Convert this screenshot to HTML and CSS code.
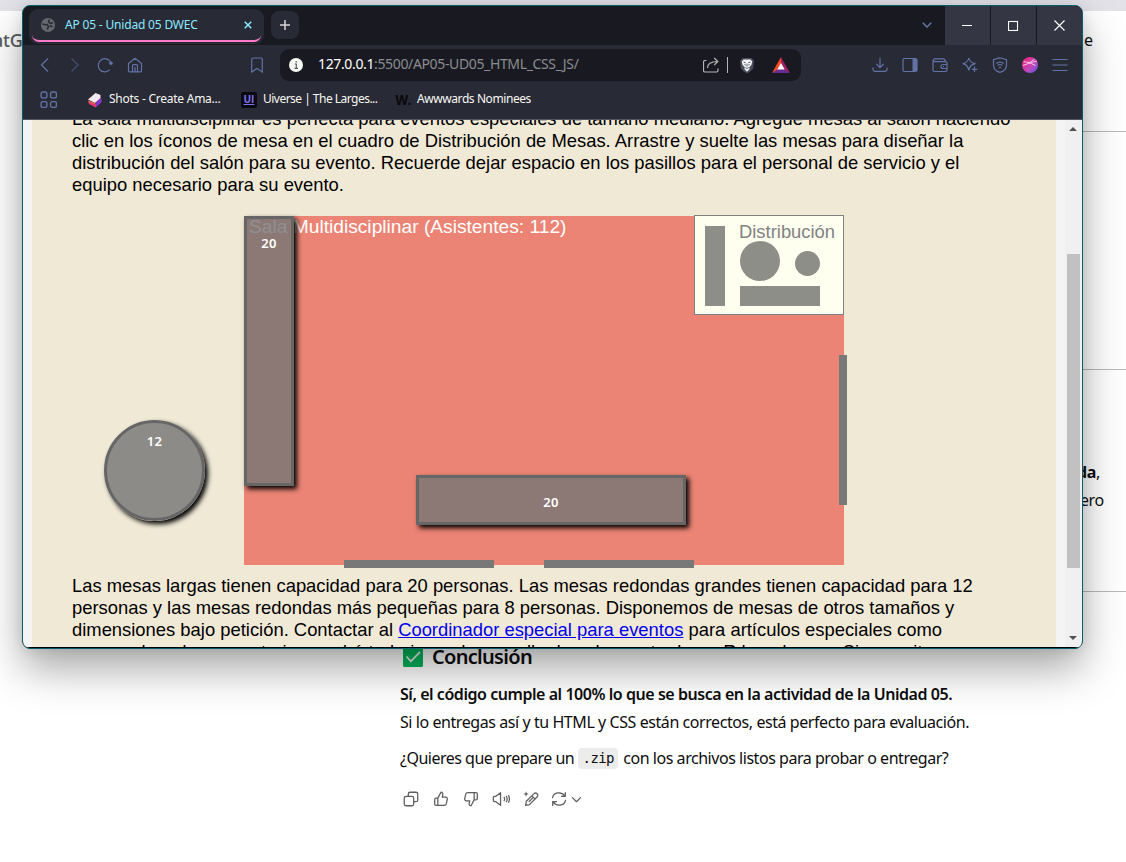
FILE: index.html
```
<!DOCTYPE html>
<html lang="es">
<head>
<meta charset="utf-8">
<title>AP 05 - Unidad 05 DWEC</title>
<link rel="stylesheet" href="styles.css">
</head>
<body>
<div class="desktop">
  <main class="chat">
    <div class="chat-strip"></div>
    <div class="chat-row row-top"><span class="brand">atGPT</span><span class="tail">le</span></div>
    <div class="chat-row row-mid"></div>
    <div class="chat-row row-low"><div class="tail-lines"><div class="t1"><b>da</b>,</div><div class="t2">ero</div></div></div>
    <section class="answer">
      <h2><svg class="check" viewBox="0 0 20 20"><rect width="20" height="20" rx="1.5" fill="#00b35b"/><path d="M3.500 9.500l4.300 4.800L17 5" fill="none" stroke="#e2eee6" stroke-width="1.800"/></svg><span>Conclusión</span></h2>
      <p class="p1"><b>Sí, el código cumple al 100% lo que se busca en la actividad de la Unidad 05.</b></p>
      <p class="p2">Si lo entregas así y tu HTML y CSS están correctos, está perfecto para evaluación.</p>
      <p class="p3"><span>¿Quieres que prepare un</span><code>.zip</code><span class="p3b">con los archivos listos para probar o entregar?</span></p>
      <div class="actions">
        <svg viewBox="0 0 20 20"><rect x="2.500" y="7" width="10.500" height="10.500" rx="2"/><path d="M7 7V4.500a2 2 0 0 1 2-2h6.500a2 2 0 0 1 2 2V11a2 2 0 0 1-2 2h-2.500"/></svg>
        <svg viewBox="0 0 20 20"><path d="M6.500 9v8H4.500a1.500 1.500 0 0 1-1.500-1.500v-5A1.500 1.500 0 0 1 4.500 9zL10 2.500c1.700 0 2.300 1.300 2 2.700L11.400 8H15c1.500 0 2.300 1.200 2 2.500l-1.200 5c-.3 1.100-1.100 1.700-2.200 1.700H6.500"/></svg>
        <svg viewBox="0 0 20 20"><path d="M13.500 11V3h2A1.500 1.500 0 0 1 17 4.500v5a1.500 1.500 0 0 1-1.500 1.500zL10 17.500c-1.700 0-2.300-1.300-2-2.700L8.600 12H5c-1.500 0-2.300-1.200-2-2.500l1.200-5C4.500 3.400 5.300 2.800 6.400 2.800h7.100"/></svg>
        <svg viewBox="0 0 20 20"><path d="M1.500 8.500v3c0 .8.500 1.500 1.300 1.500h1.500l5.200 4V3L4.300 7H2.800C2 7 1.500 7.700 1.500 8.500zM13.500 8q1 2 0 4M16 7q1.700 3 0 6M18.500 6.300q1.700 3.700 0 7.400"/></svg>
        <svg viewBox="0 0 20 20"><path d="M4 17l.8-4.500 8.300-8.200c2.500-2.500 6.100 1 3.600 3.500L8.300 16.200zM11 6.500l3.600 3.600M8 12.800l4-4"/><path class="solid" d="M4.500 1.500l.8 2.200 2.200.8-2.200.8-.8 2.200-.8-2.200-2.200-.8 2.200-.8z"/></svg>
        <svg viewBox="0 0 20 20"><path d="M2.800 8.500C4.200 2 12.500 1.500 16.500 6.500M17 2.800V7h-4.200M17.200 11.500C15.800 18 7.500 18.500 3.500 13.500M3 17.200V13h4.200"/></svg>
        <svg class="chev" viewBox="0 0 12 20"><path d="M1.500 8.500L6 13l4.500-4.500"/></svg>
      </div>
    </section>
  </main>

  <div class="window">
    <div class="tabbar">
      <div class="tab">
        <svg class="globe" viewBox="0 0 14 14"><circle cx="7" cy="7" r="7" fill="#65686e"/><path d="M1.500 6l3 .8 1.500-.3 1.500 2-1.300 3M8.500 1.500L7.500 4l2 1.500 2.500-1M8.500 8l3 .5" fill="none" stroke="#282a36" stroke-width="1.500"/></svg>
        <span class="tab-title">AP 05 - Unidad 05 DWEC</span>
        <svg class="tab-x" viewBox="0 0 8 8"><path d="M.7.7l6.600 6.600M7.300.7L.7 7.300"/></svg>
      </div>
      <div class="newtab"><svg viewBox="0 0 10 10"><path d="M5 0v10M0 5h10"/></svg></div>
      <svg class="tab-chev" viewBox="0 0 10 6"><path d="M.8.800L5 5 9.200.8"/></svg>
      <div class="winbtn"><svg viewBox="0 0 11 11"><path d="M0 5.500h10"/></svg></div>
      <div class="winbtn"><svg viewBox="0 0 11 11"><rect x=".5" y="1.500" width="9" height="9"/></svg></div>
      <div class="winbtn last"><svg viewBox="0 0 11 11"><path d="M.5.500l10 10M10.500.5l-10 10"/></svg></div>
    </div>
    <div class="toolbar">
      <svg class="ic" viewBox="0 0 16 16"><path d="M11 1.500L4.500 8l6.500 6.500"/></svg>
      <svg class="ic dim" viewBox="0 0 16 16"><path d="M4.500 1.500L11 8l-6.500 6.500"/></svg>
      <svg class="ic" viewBox="0 0 16 16"><path d="M12.800 12.700A6.600 6.600 0 1 1 14 6"/><circle cx="14" cy="6.200" r="1.800" class="dot"/></svg>
      <svg class="ic" viewBox="0 0 16 16"><path d="M1.500 6.500L8 1.200l6.500 5.300v7.300a1 1 0 0 1-1 1h-11a1 1 0 0 1-1-1zM5.500 14.500V8.700a1 1 0 0 1 1-1h3a1 1 0 0 1 1 1v5.800M8 10v4.500"/></svg>
      <svg class="ic mark" viewBox="0 0 16 16"><path d="M2.700 2.500a1.500 1.500 0 0 1 1.500-1.500h7.600a1.500 1.500 0 0 1 1.500 1.500V15L8 11.500 2.700 15z"/></svg>
      <div class="address">
        <svg class="info" viewBox="0 0 14 14"><circle cx="7" cy="7" r="7" fill="#f8f8f2"/><path d="M5.700 6H7.300v4.300M5.500 10.300h3.500M7.200 3v1.500" fill="none" stroke="#555862" stroke-width="1.200"/></svg>
        <span class="url"><em>127.0.0.1</em>:5500/AP05-UD05_HTML_CSS_JS/</span>
        <svg class="share" viewBox="0 0 16 16"><path d="M3.500 3.500H2a1.500 1.500 0 0 0-1.500 1.500v8.500A1.500 1.500 0 0 0 2 15h11.500A1.500 1.500 0 0 0 15 13.500v-2M4.500 11c0-4 3-6.500 10-6.500M11.200 1l3.600 3.500-3.600 3.700"/></svg>
        <i class="sep"></i>
        <svg class="brave" viewBox="0 0 16 18"><path d="M3 .5h10l3 3-1 8.500-3 3.500-4 2.500-4-2.500L1 12 0 3.500z" fill="#4a4d5c"/><path d="M4 2h8l2 2.500-1 4-2.500 2.500.5 2-3 3-3-3 .5-2L3 8.500l-1-4z" fill="#f5f5f7"/><path d="M4 5l2.500 1M12 5L9.500 6M8 7v3M6 11.500l2 .8 2-.8M5 8l1.500.5M11 8l-1.500.5" stroke="#444756" fill="none"/></svg>
        <svg class="bat" viewBox="0 0 18 16"><path d="M9 0L0 16l9-5z" fill="#ff4724"/><path d="M9 0l9 16-9-5z" fill="#9e1f63"/><path d="M0 16h18l-9-5.500z" fill="#662d91"/><path d="M9 6l3.700 6.500H5.300z" fill="#fff"/></svg>
      </div>
      <div class="tools">
        <svg class="ic" viewBox="0 0 16 16"><path d="M8 1v9.500M4.300 7L8 10.700 11.700 7M1 10.500v2A1.800 1.800 0 0 0 2.800 14.300h10.400A1.800 1.800 0 0 0 15 12.500v-2"/></svg>
        <svg class="ic" viewBox="0 0 16 16"><rect x="1" y="1.500" width="14" height="13" rx="1.500"/><path d="M10.500 2h4.500v12h-4.500z" class="dot"/></svg>
        <svg class="ic" viewBox="0 0 16 16"><path d="M13 4.500V3.300A1.500 1.500 0 0 0 11.500 1.800H2.500a1.500 1.500 0 0 0 0 2.800h11A1.500 1.500 0 0 1 15 6v7a1.500 1.500 0 0 1-1.500 1.500h-11A1.500 1.500 0 0 1 1 13V3.300M15 7.500h-4a2 2 0 0 0 0 4h4M11 9.500h1"/></svg>
        <svg class="ic" viewBox="0 0 16 16"><path d="M6.800 1Q7.800 5.700 13.500 6.700Q7.800 7.700 6.800 13.500Q5.800 7.700.7 6.700Q5.800 5.700 6.800 1zM12.500 9.500v5.500M9.800 12.300h5.500"/></svg>
        <svg class="ic" viewBox="0 0 16 16"><path d="M8 .7l6.500 2v5.500c0 3.500-3 6-6.500 7.200C4.500 14.200 1.500 11.700 1.500 8.200V2.700zM4.300 6.500q3.700-2.800 7.400 0M5.500 8.500q2.500-2 5 0"/><circle cx="8" cy="10.500" r="1" class="dot"/></svg>
        <svg class="ic" viewBox="0 0 16 16"><defs><linearGradient id="av" x1="0" y1="0" x2="1" y2="1"><stop offset=".2" stop-color="#e52d87"/><stop offset=".6" stop-color="#c048bc"/><stop offset="1" stop-color="#4c59e5"/></linearGradient></defs><circle cx="8" cy="8" r="8" fill="url(#av)" stroke="none"/><path class="streak" d="M1.500 4.500Q7 6.500 15 4M1 8.500Q8 7 12.500 2M6 5.500Q10 6.500 13.500 8.500"/></svg>
        <svg class="ic" viewBox="0 0 16 16"><path d="M.5 2.500h15M.5 8h15M.5 13.500h15"/></svg>
      </div>
    </div>
    <div class="bookmarks">
      <svg class="apps" viewBox="0 0 17 17"><rect x="1" y="1" width="5.500" height="5.500" rx="1.500"/><rect x="10" y="1" width="5.500" height="5.500" rx="1.500"/><rect x="1" y="10" width="5.500" height="5.500" rx="1.500"/><rect x="10" y="10" width="5.500" height="5.500" rx="1.500"/></svg>
      <div class="bm bm1"><svg viewBox="0 0 16 16"><path d="M1 9l7 3 6-6 .5 4L8.500 15.500 2 12z" fill="#dd3478"/><path d="M9 11l5-5 .5 3.500L9 15z" fill="#7b35df"/><path d="M1 7.500L8.500 1l5 2v3L8 11z" fill="#f6e9ee"/><path d="M1 8.500L8 11l.5 1.500L2 10.500z" fill="#ef6550"/></svg><span>Shots - Create Ama...</span></div>
      <div class="bm bm2"><span class="ui-logo">UI</span><span>Uiverse | The Larges...</span></div>
      <div class="bm bm3"><span class="aw-logo">W.</span><span>Awwwards Nominees</span></div>
    </div>
    <div class="viewport">
      <article class="page">
        <div class="copy intro">
          <div class="l1">La sala multidisciplinar es perfecta para eventos especiales de tamaño mediano. Agregue mesas al salón haciendo</div>
          <div>clic en los íconos de mesa en el cuadro de Distribución de Mesas. Arrastre y suelte las mesas para diseñar la</div>
          <div>distribución del salón para su evento. Recuerde dejar espacio en los pasillos para el personal de servicio y el</div>
          <div>equipo necesario para su evento.</div>
        </div>
        <div class="room">
          <div class="room-title">Sala Multidisciplinar (Asistentes: 112)</div>
          <div class="palette"><span>Distribución</span><i class="m-v"></i><i class="m-c"></i><i class="m-s"></i><i class="m-h"></i></div>
          <i class="door d1"></i><i class="door d2"></i><i class="door d3"></i>
          <div class="table tall">20</div>
          <div class="table round">12</div>
          <div class="table wide">20</div>
        </div>
        <div class="copy outro">
          <div>Las mesas largas tienen capacidad para 20 personas. Las mesas redondas grandes tienen capacidad para 12</div>
          <div>personas y las mesas redondas más pequeñas para 8 personas. Disponemos de mesas de otros tamaños y</div>
          <div>dimensiones bajo petición. Contactar al <a href="#">Coordinador especial para eventos</a> para artículos especiales como</div>
          <div>mesas plegadas, secretarias, podrá trabajar cada una ella de colores otro largo R has de una. Si necesita</div>
        </div>
      </article>
      <div class="scrollbar"><b class="up"></b><i class="thumb"></i><b class="down"></b></div>
    </div>
  </div>
</div>
</body>
</html>
```
FILE: styles.css
```
* { box-sizing: border-box; }
body { margin: 0; background: #fff; }
.desktop { position: relative; width: 1126px; height: 862px; overflow: hidden; font-family: "Noto Sans", "Open Sans", sans-serif; color: #0d0d0d; }
svg { display: block; flex: none; fill: none; }
.chat { display: flex; flex-direction: column; height: 862px; }
.chat-strip { height: 11px; background: #e3e2e8; }
.chat-row { border-bottom: 1px solid #bababa; margin-left: 400px; display: flex; justify-content: space-between; font-size: 16px; }
.row-top { height: 121px; padding: 17px 33px 0 0; line-height: 24px; }
.row-mid { height: 238px; }
.row-low { height: 222px; justify-content: flex-end; padding-top: 88px; }
.brand { font-size: 18px; color: #5d5d5d; font-weight: 500; margin-left: -407px; letter-spacing: -.2px; }
.tail-lines { width: 50px; line-height: 28px; letter-spacing: -.4px; }
.t1 { margin-left: 1px; }
.t2 { margin-left: 4px; }
.answer { padding-left: 400px; }
.answer h2 { display: flex; align-items: center; gap: 9px; margin: 50px 0 0 3px; height: 30px; font-size: 20px; line-height: 30px; font-weight: 600; letter-spacing: -.7px; }
.check { width: 20px; height: 20px; }
.answer p { margin: 0; font-size: 16px; line-height: 28px; white-space: nowrap; }
.answer .p1 { margin-top: 8px; letter-spacing: -.45px; }
.answer b { font-weight: 600; }
.answer .p2 { letter-spacing: -.43px; }
.answer .p3 { display: flex; align-items: center; margin-top: 8px; letter-spacing: -.5px; }
.p3b { letter-spacing: -.46px; }
.answer code { font-family: "DejaVu Sans Mono", monospace; font-size: 14px; line-height: 21px; width: 40px; text-align: center; border-radius: 4px; background: #ececec; margin: 0 5px 0 4px; letter-spacing: -.6px; }
.actions { display: flex; align-items: center; gap: 12px; margin: 18px 0 0 2px; }
.actions svg { width: 18px; height: 18px; stroke: #5d5d5d; stroke-width: 1.4; stroke-linejoin: round; stroke-linecap: round; }
.actions svg:nth-child(6) { margin-left: -2px; }
.actions .solid { fill: #5d5d5d; stroke: none; }
.actions .chev { width: 11px; margin-left: -9px; }

.window { position: absolute; left: 22px; top: 5px; width: 1061px; height: 644px; display: flex; flex-direction: column; border: 1px solid #055e6b; border-radius: 8px; overflow: hidden; background: #282a36; box-shadow: 0 20px 42px rgba(0,0,0,.34), 0 0 14px rgba(0,0,0,.1); }
.tabbar { height: 39px; flex: none; display: flex; align-items: flex-start; background: #191a21; }
.tab { display: flex; align-items: center; width: 235px; height: 35px; margin: 3px 0 0 6px; padding: 0 12px; border-radius: 9px; background: #282a36; position: relative; color: #8be9fd; }
.tab::after { content: ""; position: absolute; left: 3px; right: 3px; bottom: 2px; height: 8px; border-bottom: 2px solid #ff79c6; border-radius: 0 0 7px 7px; }
.globe { width: 14px; height: 14px; }
.tab-title { margin-left: 10px; font-size: 12px; line-height: 18px; letter-spacing: -.18px; flex: 1; white-space: nowrap; margin-top: -3px; }
.tab .globe, .tab .tab-x { margin-top: -3px; }
.tab-x { width: 8px; height: 8px; stroke: #8be9fd; stroke-width: 1.5; }
.newtab { width: 28px; height: 28px; margin: 5px auto 0 7px; border-radius: 8px; background: #282a36; display: grid; place-items: center; }
.newtab svg { width: 10px; height: 10px; stroke: #d8d8d8; stroke-width: 1.5; }
.tab-chev { width: 10px; height: 6px; margin: 16px 13px 0 0; stroke: #6272a4; stroke-width: 1.6; }
.winbtn { width: 45px; height: 39px; margin-right: 1px; background: #343644; display: grid; place-items: center; }
.winbtn.last { margin-right: 0; }
.winbtn svg { width: 11px; height: 11px; stroke: #fff; stroke-width: 1.1; }
.toolbar { height: 40px; flex: none; display: flex; align-items: center; padding-left: 14px; }
.ic { width: 16px; height: 16px; margin-right: 14px; stroke: #6272a4; stroke-width: 1.2; }
.ic .dot { fill: #6272a4; stroke: none; }
.ic .streak { stroke: #f5c4e8; stroke-width: 1; }
.ic.dim { stroke: #454e70; }
.mark { margin: 0 15px 0 92px; }
.address { width: 521px; height: 32px; border-radius: 9px; background: #191a21; display: flex; align-items: center; padding-left: 9px; }
.info { width: 14px; height: 14px; }
.url { font-size: 14px; line-height: 20px; margin-top: -2px; color: #8b8c8f; margin-left: 15px; letter-spacing: -.36px; white-space: nowrap; width: 385px; }
.url em { font-style: normal; color: #fff; }
.share { width: 16px; height: 16px; stroke: #b5b5b5; stroke-width: 1.2; }
.sep { width: 1px; height: 16px; margin: 0 12px 0 8px; background: #b5b5b5; }
.brave { width: 14px; height: 17px; }
.bat { width: 18px; height: 16px; margin-left: 18px; }
.tools { display: flex; margin-left: 71px; gap: 14px; }
.tools .ic { margin: 0; }
.bookmarks { height: 34px; flex: none; display: flex; align-items: center; padding: 0 0 4px 17px; font-size: 12px; color: #f8f8f2; white-space: nowrap; }
.apps { width: 18px; height: 18px; stroke: #6272a4; stroke-width: 1.3; margin-right: 29px; }
.bm { display: flex; align-items: center; gap: 5px; line-height: 16px; }
.bm span:last-child { margin-top: -2px; }
.bm svg { width: 16px; height: 16px; }
.bm1 { width: 154px; letter-spacing: -.25px; }
.bm2 { width: 154px; letter-spacing: -.52px; }
.bm3 { letter-spacing: -.42px; }
.bm1, .bm3 { gap: 6px; }
.ui-logo { width: 16px; height: 16px; border-radius: 2px; background: #090a11; color: #8070ee; font: bold 10px/15px "Open Sans", sans-serif; letter-spacing: 0; text-align: center; text-decoration: underline; margin-right: 1px; }
.aw-logo { width: 16px; color: #08090a; font: bold 13px/16px "Inter", sans-serif; letter-spacing: 0; }

.viewport { flex: 1; min-height: 0; display: flex; background: #f4f4f4; border-top: 1px solid #555460; border-bottom: 1px solid #000; padding-left: 9px; }
.page { width: 1024px; margin-right: 9px; overflow: hidden; background: #f0e9d6; padding-left: 40px; }
.copy { font: 18.4px/22px "Liberation Sans", Arial, sans-serif; color: #000; white-space: nowrap; }
.intro { margin-top: -12px; }
.copy a { color: #00e; }
.room { position: relative; width: 600px; height: 349px; margin: 20px 0 10px 172px; background: #eb8475; font-family: "Liberation Sans", Arial, sans-serif; }
.room-title { padding: 0 0 0 5px; font-size: 19.2px; line-height: 22px; color: #fff; white-space: nowrap; }
.palette { position: absolute; left: 450px; top: -1px; width: 150px; height: 100px; border: 1px solid #808080; background: #fffff0; }
.palette span { position: absolute; left: 44px; top: 5px; font-size: 18.4px; line-height: 22px; color: #828282; }
.palette i { position: absolute; background: #8e8e88; }
.palette .m-v { left: 10px; top: 10px; width: 20px; height: 80px; }
.palette .m-c { left: 45px; top: 25px; width: 40px; height: 40px; border-radius: 50%; }
.palette .m-s { left: 100px; top: 35px; width: 25px; height: 25px; border-radius: 50%; }
.palette .m-h { left: 45px; top: 70px; width: 80px; height: 20px; }
.door { position: absolute; background: #787878; }
.d1 { left: 595px; top: 139px; width: 8px; height: 150px; }
.d2 { left: 100px; top: 344px; width: 150px; height: 8px; }
.d3 { left: 300px; top: 344px; width: 150px; height: 8px; }
.table { position: absolute; border: 3px solid #666; background: rgba(118,118,118,.82); color: #fff; text-align: center; font: 600 13px/18px "Noto Sans", sans-serif; letter-spacing: .4px; box-shadow: 3px 3px 5px #000; }
.tall { left: 0; top: 0; width: 50px; height: 270px; padding-top: 15px; }
.round { left: -140px; top: 204px; width: 101px; height: 101px; border-radius: 50%; padding-top: 9px; }
.wide { left: 172px; top: 259px; width: 270px; height: 50px; line-height: 48px; }
.scrollbar { width: 16px; background: #f0f0f0; display: flex; flex-direction: column; align-items: center; padding: 7px 0; }
.up { border: 4px solid transparent; border-top: 0; border-bottom-color: #505050; }
.down { border: 4px solid transparent; border-bottom: 0; border-top-color: #505050; margin-top: auto; }
.thumb { width: 13px; height: 314px; background: #c1c1c1; margin-top: 123px; }
```
